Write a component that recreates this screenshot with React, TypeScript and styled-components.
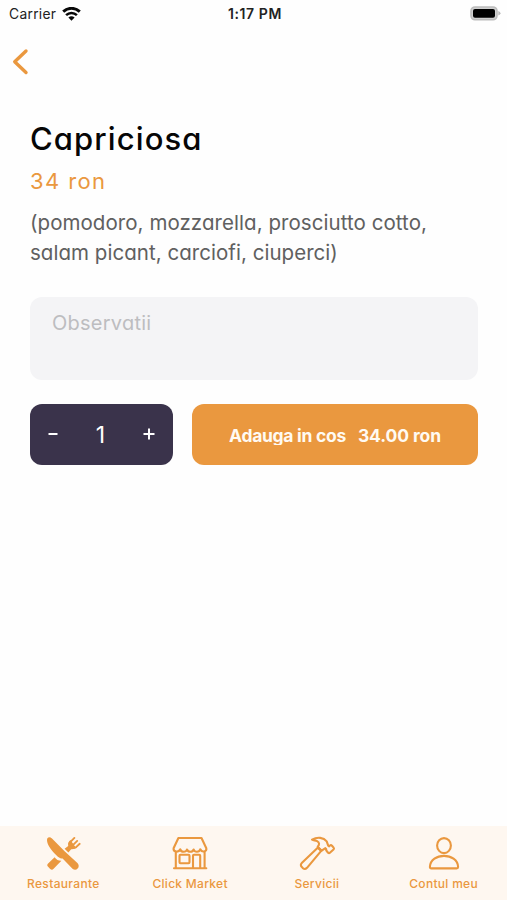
import React from "react";
import styled, { createGlobalStyle } from "styled-components";

const ORANGE = "#ea983f";

const GlobalStyle = createGlobalStyle`
  *, *::before, *::after { box-sizing: border-box; }
  body {
    margin: 0;
    background: #fefefe;
    font-family: Inter, "Liberation Sans", sans-serif;
  }
  button, textarea { font: inherit; border: 0; margin: 0; padding: 0; }
`;

const Screen = styled.div`
  display: flex;
  flex-direction: column;
  height: 900px;
  overflow: hidden;
`;

const StatusBar = styled.header`
  display: grid;
  grid-template-columns: 1fr auto 1fr;
  align-items: center;
  height: 27px;
  padding: 0 6px 0 9px;
  font-size: 13.8px;
  color: #222;
`;

const Carrier = styled.div`
  display: flex;
  align-items: center;
  gap: 6px;
  letter-spacing: 0.3px;
`;

const Clock = styled.time`
  font-weight: 600;
  font-size: 14px;
  letter-spacing: 0.6px;
`;

const Battery = styled.svg`
  justify-self: end;
`;

const NavBar = styled.nav`
  height: 73px;
  padding: 21px 12px 0;
`;

const BackButton = styled.button`
  display: block;
  background: none;
  height: 28px;
`;

const Content = styled.main`
  flex: 1;
  padding: 18px 29px 0 30px;
  font-feature-settings: "cv11";
`;

const Title = styled.h1`
  margin: 0;
  font-size: 31px;
  line-height: 42px;
  font-weight: 500;
  letter-spacing: 1.1px;
  color: #060606;
`;

const Price = styled.p`
  margin: 5px 0 0;
  font-size: 22px;
  line-height: 32px;
  letter-spacing: 1.4px;
  color: ${ORANGE};
`;

const Description = styled.p`
  margin: 11px 0 0;
  font-size: 20.5px;
  line-height: 29.5px;
  color: #606060;
`;

const DescriptionLine = styled.span<{ $tracking: number }>`
  display: block;
  white-space: nowrap;
  letter-spacing: ${(p) => p.$tracking}px;
`;

const Notes = styled.textarea`
  display: block;
  width: 100%;
  height: 83px;
  margin-top: 30px;
  padding: 12px 22px;
  border-radius: 12px;
  background: #f4f4f6;
  resize: none;
  outline: none;
  font-size: 20px;
  line-height: 28px;
  letter-spacing: 0.25px;
  &::placeholder { color: #bdbdc0; opacity: 1; }
`;

const Actions = styled.div`
  display: grid;
  grid-template-columns: 143px 1fr;
  gap: 19px;
  height: 61px;
  margin-top: 24px;
`;

const Stepper = styled.div`
  display: grid;
  grid-template-columns: 46px 1fr 48px;
  align-items: center;
  justify-items: center;
  border-radius: 12px;
  background: #3a334b;
  color: #fff;
`;

const StepButton = styled.button`
  display: flex;
  background: none;
  color: #fff;
`;

const Quantity = styled.span`
  font-size: 23px;
  line-height: 28px;
`;

const AddButton = styled.button`
  display: flex;
  align-items: center;
  justify-content: center;
  gap: 12px;
  padding-top: 2px;
  border-radius: 12px;
  background: ${ORANGE};
  color: #fffaf2;
  font-size: 17.5px;
  font-weight: 700;
  font-feature-settings: normal;
`;

const AddLabel = styled.span<{ $tracking: number }>`
  height: 18px;
  line-height: 18px;
  overflow: hidden;
  white-space: nowrap;
  letter-spacing: ${(p) => p.$tracking}px;
`;

const TabBar = styled.footer`
  display: grid;
  grid-template-columns: repeat(4, 1fr);
  height: 74px;
  background: #fef7f0;
`;

const Tab = styled.a`
  display: flex;
  flex-direction: column;
  align-items: center;
  padding-top: 9px;
  color: ${ORANGE};
`;

const TabLabel = styled.span<{ $tracking: number }>`
  margin-top: 5px;
  font-size: 12px;
  line-height: 16px;
  font-weight: 500;
  white-space: nowrap;
  letter-spacing: ${(p) => p.$tracking}px;
`;

const TabIcon = styled.svg`
  width: 38px;
  height: 36px;
  fill: none;
  stroke: currentColor;
  stroke-width: 2.1;
  stroke-linecap: round;
  stroke-linejoin: round;
`;

const CutleryIcon = () => (
  <TabIcon viewBox="0 0 38 36">
    <g fill="currentColor" stroke="none">
      <path d="M3.4 3.2C4.6 1.6 6.4 2 8 3.5L20.6 16.2L33.4 28C37 31.8 32.4 36.8 28.5 33.7L18.6 23.4C16.6 24 14.6 22.6 12.6 20.6C7.4 15.6 1.4 8.2 3.4 3.2Z" />
      <path d="M10.6 22.2C12.4 24.6 14.4 25.9 17.4 25.8L9.6 33.8C8.4 35 7.4 35 6.2 33.9L4.1 31.8C3 30.7 3 29.6 4.1 28.5Z" />
      <path d="M20.6 13.8L24.2 11C23.7 8.6 24.6 6.8 26.4 5L31.4 12L33.6 11.6C31.4 13.6 29.6 14.4 27.2 14.2L24.4 17.4Z" />
    </g>
    <path d="M30.4 2.9L26 7.4M33.2 5.9L28.4 10.6M35.7 8.8L31.6 12.6" strokeWidth="1.9" />
    <path d="M25.6 8.4L30 12.6" strokeWidth="2.6" />
  </TabIcon>
);

const MarketIcon = () => (
  <TabIcon viewBox="0 0 38 36">
    <path d="M7.4 3H30.5L35.3 13.3C36 16.4 31.2 18.2 29.3 14.3C28.3 17.6 23.7 17.6 22.7 14.5C21.5 17.5 17.2 17.5 16 14.5C14.9 17.6 10.4 17.6 9.3 14.3C7.3 18.2 2.1 16.6 2.6 13.3Z" />
    <path d="M4.8 17.2V32.6M33.6 17.2V32.6M3 33.2H35.3" />
    <rect x="8.5" y="19.8" width="10" height="8.4" rx="1" />
    <path d="M22 33V20.7Q22 19.7 23 19.7H28.2Q29.2 19.7 29.2 20.7V33" />
  </TabIcon>
);

const HammerIcon = () => (
  <TabIcon viewBox="0 -.6 38 36">
    <path d="M14 4C19.5 1.1 25.6 1.8 28.7 5.7L30.2 10L31.2 10.7L32 9.9Q33 9.1 34 10.1L35.6 12Q36.4 13 35.5 13.9L31.9 17.2Q31 18 30.1 17.1L28.5 15.2Q27.7 14.3 28.3 13.6L27.4 12.6L23.7 15.1L19.7 11.2Q22.7 7.7 19.1 5.5C17.6 4.7 15.4 4.8 14 4Z" />
    <path d="M19.7 12.1L4 27.1Q1.8 29.3 3.8 31.3L5 32.6Q7 34.4 9 32.2L23.2 15.2Z" />
    <path d="M20.1 12L23 15" />
  </TabIcon>
);

const AccountIcon = () => (
  <TabIcon viewBox="0 -.3 38 36">
    <ellipse cx="19" cy="10.3" rx="6.9" ry="7.5" />
    <path d="M4.9 31.7C5.4 16.8 32.6 16.8 33.1 31.7Q33.1 33.1 31.7 33.1H6.3Q4.9 33.1 4.9 31.7Z" />
  </TabIcon>
);

const tabs = [
  { label: "Restaurante", Icon: CutleryIcon, tracking: 0.35 },
  { label: "Click Market", Icon: MarketIcon, tracking: 0.3 },
  { label: "Servicii", Icon: HammerIcon, tracking: 0.3 },
  { label: "Contul meu", Icon: AccountIcon, tracking: 0.3 },
];

export default function App() {
  return (
    <Screen>
      <GlobalStyle />
      <StatusBar>
        <Carrier>
          <span>Carrier</span>
          <svg width="19" height="14" viewBox="0 0 19 14" fill="none" stroke="#080808">
            <path d="M1.2 4.6C6 .2 13 .2 17.8 4.6" strokeWidth="2.9" />
            <path d="M4.1 8.1C7.2 5.2 11.8 5.2 14.9 8.1" strokeWidth="2.6" />
            <path d="M9.5 13.7L6.4 10.5Q9.5 7.8 12.6 10.5Z" fill="#080808" stroke="none" />
          </svg>
        </Carrier>
        <Clock>1:17 PM</Clock>
        <Battery width="31" height="15" viewBox="0 0 31 15">
          <rect x="1" y="1" width="26" height="12.8" rx="4" fill="#d0d0d0" stroke="#bcbcbc" strokeWidth="1.6" />
          <rect x="3" y="3" width="22" height="8.8" rx="2" fill="#000" />
          <path d="M28.3 5V9.6Q30.5 8.8 30.5 7.3T28.3 5Z" fill="#b9b9b9" />
        </Battery>
      </StatusBar>
      <NavBar>
        <BackButton aria-label="Inapoi">
          <svg width="17" height="28" viewBox="0 0 17 28" fill="none" stroke={ORANGE} strokeWidth="3.4" strokeLinecap="round" strokeLinejoin="round">
            <path d="M14 3L2.7 13.7L14 24.5" />
          </svg>
        </BackButton>
      </NavBar>
      <Content>
        <Title>Capriciosa</Title>
        <Price>34 ron</Price>
        <Description>
          <DescriptionLine $tracking={0.06}>(pomodoro, mozzarella, prosciutto cotto,</DescriptionLine>
          <DescriptionLine $tracking={0.04}>salam picant, carciofi, ciuperci)</DescriptionLine>
        </Description>
        <Notes placeholder="Observatii" />
        <Actions>
          <Stepper>
            <StepButton aria-label="Mai putin">
              <svg width="12" height="14" viewBox="0 0 12 14" stroke="currentColor" strokeWidth="2">
                <path d="M1.5 6H10.5" />
              </svg>
            </StepButton>
            <Quantity>1</Quantity>
            <StepButton aria-label="Mai mult">
              <svg width="12" height="14" viewBox="0 0 12 14" stroke="currentColor" strokeWidth="2">
                <path d="M.5 6H11.5M6 .5V11.5" />
              </svg>
            </StepButton>
          </Stepper>
          <AddButton>
            <AddLabel $tracking={-0.3}>Adauga in cos</AddLabel>
            <AddLabel $tracking={-0.1}>34.00 ron</AddLabel>
          </AddButton>
        </Actions>
      </Content>
      <TabBar>
        {tabs.map(({ label, Icon, tracking }) => (
          <Tab key={label}>
            <Icon />
            <TabLabel $tracking={tracking}>{label}</TabLabel>
          </Tab>
        ))}
      </TabBar>
    </Screen>
  );
}
